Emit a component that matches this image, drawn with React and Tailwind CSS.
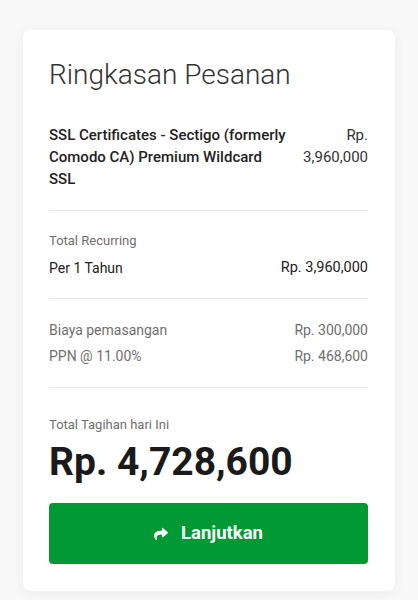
import React from "react";

const ShareIcon = () => (
  <svg viewBox="0 0 512 512" className="w-[14px] h-[14px]" fill="currentColor">
    <path d="M503.7 189.8L327.7 37.9C312.3 24.5 288 35.3 288 56v80.1C127.4 137.9 0 170.1 0 322.3c0 61.4 39.6 122.3 83.3 154.1 13.7 9.9 33.1-2.5 28.1-18.6C66.1 312.8 132.9 274.3 288 272.1V360c0 20.7 24.3 31.5 39.7 18.2l176-152c11.1-9.6 11.1-26.8 0-36.4z" />
  </svg>
);

const App = () => {
  return (
    <div className="min-h-[600px] bg-[#f8f8f8] pt-[30px] px-[23px] font-['Roboto',sans-serif]">
      {/* Order summary card */}
      <div className="bg-white rounded-lg shadow-[0_2px_12px_rgba(0,0,0,0.06)] pl-[26px] pr-[27px] pt-[28px] pb-[27px]">
        <h2 className="text-[28px] font-light text-[#333] leading-[34px]">Ringkasan Pesanan</h2>

        <div className="flex justify-between gap-3 mt-[32px] pb-[20px] border-b border-[#eaeaea]">
          <div className="text-[15px] font-medium text-[#222] leading-[22px]">
            SSL Certificates - Sectigo (formerly Comodo CA) Premium Wildcard SSL
          </div>
          <div className="text-[15px] text-[#333] leading-[22px] text-right w-[66px] shrink-0">
            Rp. 3,960,000
          </div>
        </div>

        <div className="pt-[21px] pb-[21px] border-b border-[#eaeaea]">
          <div className="text-[13px] text-[#6f6f6f] leading-[18px]">Total Recurring</div>
          <div className="flex justify-between mt-[9px] text-[14px] text-[#222] leading-[18px]">
            <span>Per 1 Tahun</span>
            <span className="text-[14.5px]">Rp. 3,960,000</span>
          </div>
        </div>

        <div className="pt-[22px] pb-[22px] border-b border-[#eaeaea] text-[14px] text-[#6f6f6f] leading-[18px] space-y-[8px]">
          <div className="flex justify-between">
            <span>Biaya pemasangan</span>
            <span>Rp. 300,000</span>
          </div>
          <div className="flex justify-between">
            <span>PPN @ 11.00%</span>
            <span>Rp. 468,600</span>
          </div>
        </div>

        <div className="pt-[28px]">
          <div className="text-[13px] text-[#6f6f6f] leading-[18px]">Total Tagihan hari Ini</div>
          <div className="text-[39px] font-bold text-[#1a1a1a] leading-[44px] mt-[6px]">Rp. 4,728,600</div>
          <button className="mt-[19px] w-full h-[61px] rounded bg-[#009933] text-white flex items-center justify-center gap-[13px] text-[18.5px] font-bold">
            <ShareIcon />
            Lanjutkan
          </button>
        </div>
      </div>
    </div>
  );
};

export default App;
